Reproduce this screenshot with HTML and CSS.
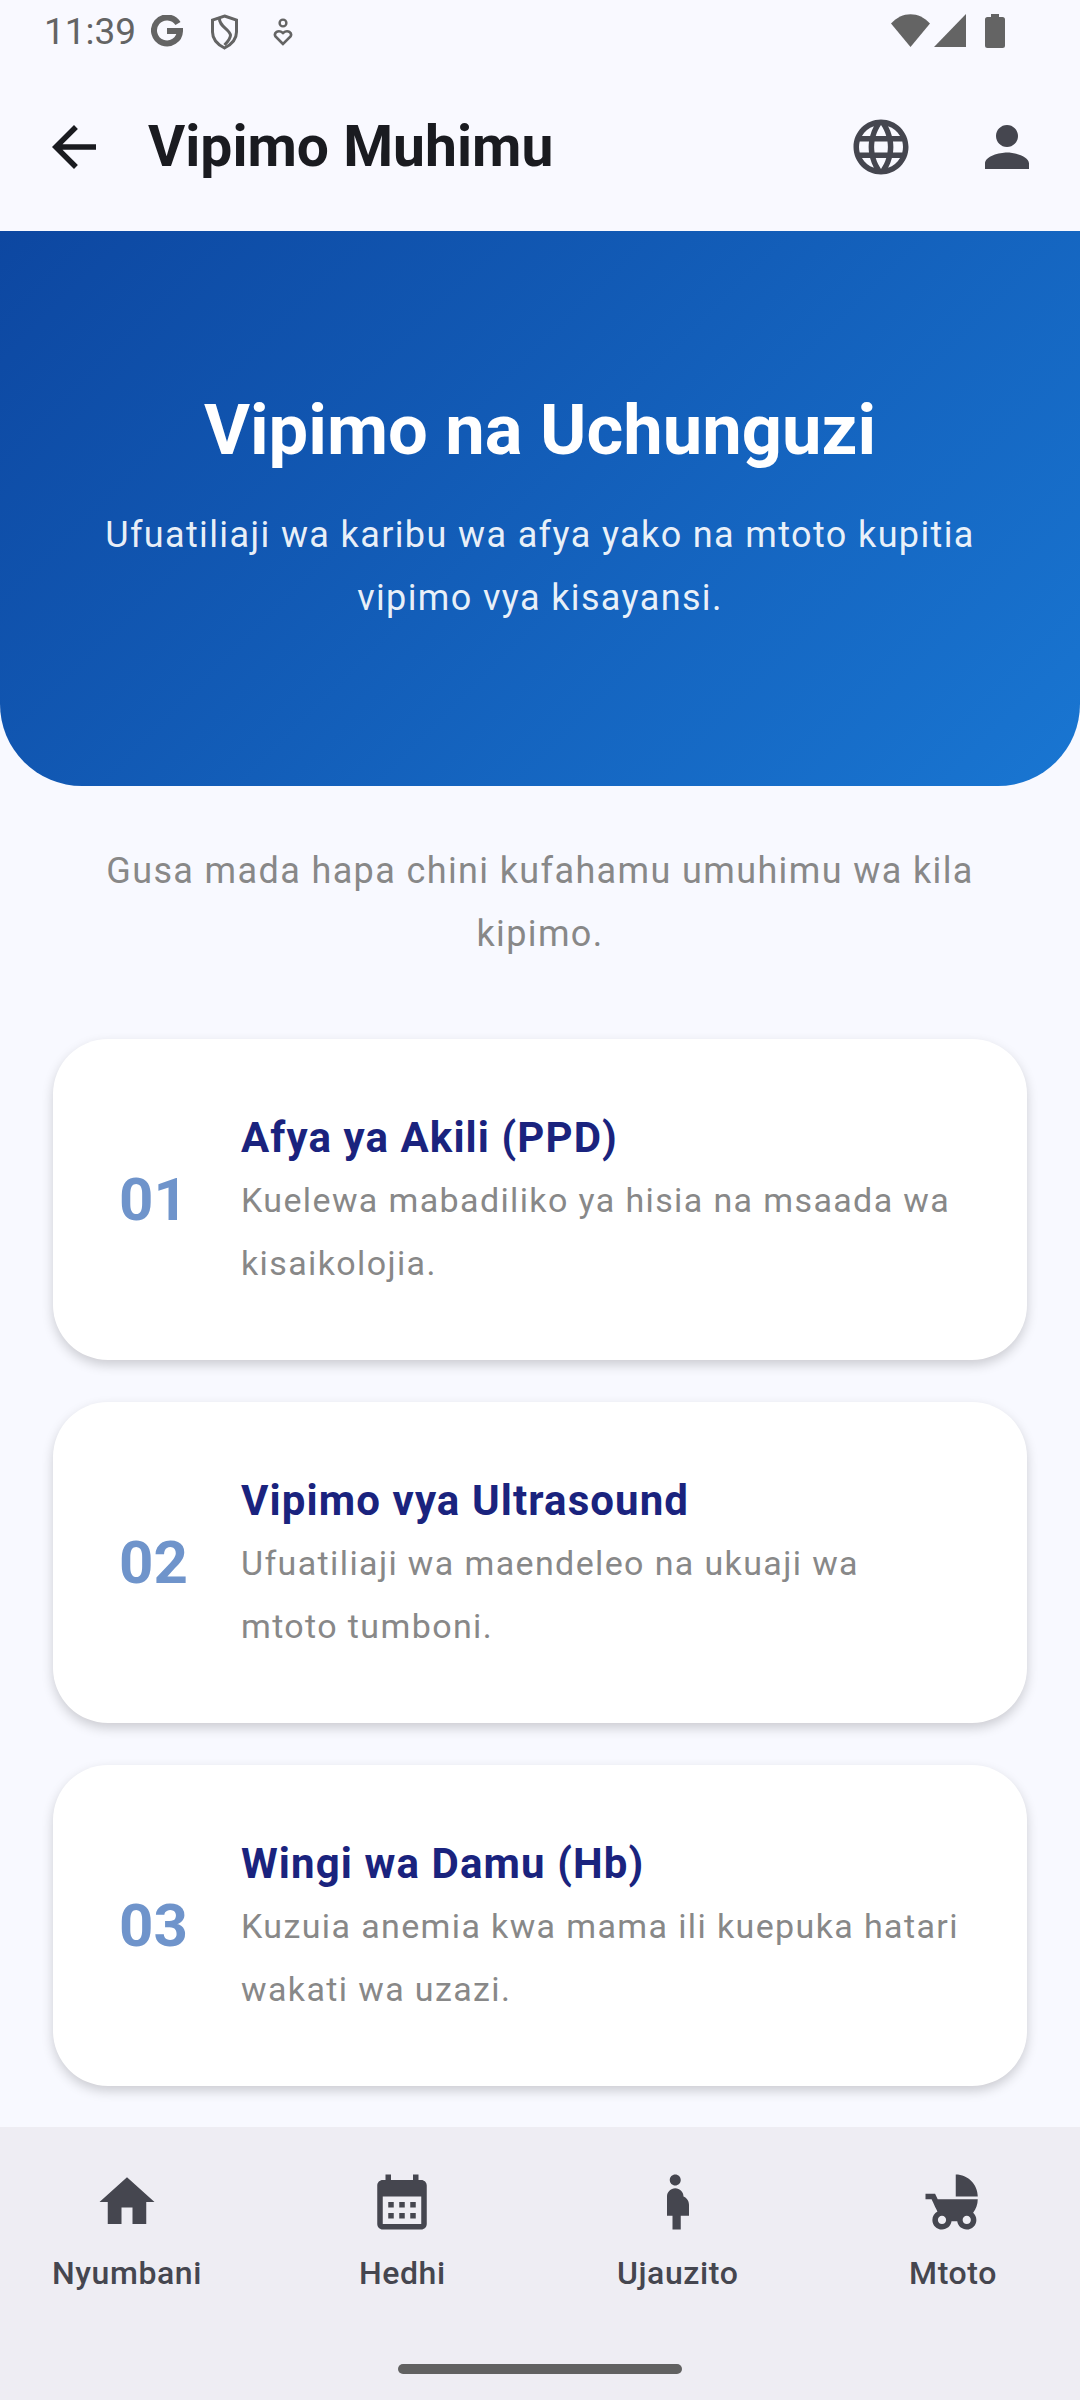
FILE: index.html
```html
<!DOCTYPE html>
<html lang="sw">
  <head>
    <meta charset="UTF-8" />
    <meta name="viewport" content="width=device-width, initial-scale=1.0" />
    <title>Vipimo Muhimu</title>
    <link rel="stylesheet" href="styles.css">
  </head>
  <body>
    <div class="status-bar">
      <div class="status-left">
        <span class="clock">11:39</span>
        <svg class="st-g" viewBox="0 0 32 32"><path d="M27 8.500A13 13 0 1 0 29 16H16" fill="none" stroke="#646464" stroke-width="6"/></svg>
        <svg class="st-shield" viewBox="0 0 28 36"><path d="M14 2 26 6V18C26 26 20 31 14 34 8 31 2 26 2 18V6Z" fill="none" stroke="#646464" stroke-width="3"/><path d="M9 4C8 12 19 15 20 21 20 25 17 28 14 31" fill="none" stroke="#646464" stroke-width="3"/></svg>
        <svg class="st-care" viewBox="0 0 20 28"><circle cx="10" cy="5" r="3.400" fill="none" stroke="#646464" stroke-width="2.400"/><path d="M10 26 2.500 18.500C.5 15 5 11 10 15 15 11 19.500 15 17.500 18.500Z" fill="none" stroke="#646464" stroke-width="2.600"/></svg>
      </div>
      <div class="status-right">
        <svg class="st-wifi" viewBox="0 0 39 33"><path d="M19.500 33 0 9.500C11-3 28-3 39 9.500Z" fill="#646464"/></svg>
        <svg class="st-signal" viewBox="0 0 32 33"><path d="M32 0V33H0Z" fill="#646464"/></svg>
        <svg class="st-battery" viewBox="0 0 20 34"><path d="M6 0H14V3H17.500A2.500 2.500 0 0 1 20 5.500V31.500A2.500 2.500 0 0 1 17.500 34H2.500A2.500 2.500 0 0 1 0 31.500V5.500A2.500 2.500 0 0 1 2.500 3H6Z" fill="#646464"/></svg>
      </div>
    </div>

    <header class="app-bar">
      <svg class="icon back" viewBox="0 0 24 24"><path d="M20 11H7.830l5.590-5.590L12 4l-8 8 8 8 1.410-1.410L7.830 13H20v-2z" fill="#1a1b20"/></svg>
      <h1 class="app-title">Vipimo Muhimu</h1>
      <svg class="icon globe" viewBox="0 0 24 24"><path d="M11.990 2C6.470 2 2 6.480 2 12s4.470 10 9.990 10C17.520 22 22 17.520 22 12S17.520 2 11.990 2zm6.930 6h-2.950c-.32-1.250-.78-2.450-1.380-3.560 1.840.63 3.370 1.910 4.330 3.560zM12 4.040c.83 1.200 1.480 2.530 1.910 3.960h-3.820c.43-1.430 1.080-2.760 1.910-3.960zM4.260 14C4.100 13.360 4 12.690 4 12s.1-1.360.26-2h3.380c-.08.66-.14 1.320-.14 2 0 .68.06 1.340.14 2H4.260zm.82 2h2.950c.32 1.250.78 2.450 1.380 3.560-1.840-.63-3.370-1.900-4.330-3.560zm2.950-8H5.080c.96-1.660 2.490-2.930 4.330-3.560C8.810 5.550 8.350 6.750 8.030 8zM12 19.960c-.83-1.200-1.480-2.530-1.910-3.960h3.820c-.43 1.430-1.080 2.760-1.910 3.960zM14.340 14H9.660c-.09-.66-.16-1.320-.16-2 0-.68.07-1.350.16-2h4.680c.09.65.16 1.320.16 2 0 .68-.07 1.340-.16 2zm.25 5.560c.6-1.110 1.060-2.310 1.380-3.560h2.950c-.96 1.650-2.490 2.930-4.330 3.560zM16.360 14c.08-.66.14-1.320.14-2 0-.68-.06-1.340-.14-2h3.380c.16.64.26 1.310.26 2s-.1 1.360-.26 2h-3.380z" fill="#45464f"/></svg>
      <svg class="icon person" viewBox="0 0 24 24"><path d="M12 12c2.210 0 4-1.790 4-4s-1.790-4-4-4-4 1.790-4 4 1.790 4 4 4zm0 2c-2.670 0-8 1.340-8 4v2h16v-2c0-2.660-5.330-4-8-4z" fill="#45464f"/></svg>
    </header>

    <section class="hero">
      <h2 class="hero-title">Vipimo na Uchunguzi</h2>
      <p class="hero-text">Ufuatiliaji wa karibu wa afya yako na mtoto kupitia vipimo vya kisayansi.</p>
    </section>

    <main class="content">
      <p class="hint">Gusa mada hapa chini kufahamu umuhimu wa kila kipimo.</p>

      <article class="card">
        <div class="card-num">01</div>
        <div class="card-body">
          <h3 class="card-title">Afya ya Akili (PPD)</h3>
          <p class="card-text">Kuelewa mabadiliko ya hisia na msaada wa kisaikolojia.</p>
        </div>
      </article>

      <article class="card">
        <div class="card-num">02</div>
        <div class="card-body">
          <h3 class="card-title">Vipimo vya Ultrasound</h3>
          <p class="card-text">Ufuatiliaji wa maendeleo na ukuaji wa mtoto tumboni.</p>
        </div>
      </article>

      <article class="card">
        <div class="card-num">03</div>
        <div class="card-body">
          <h3 class="card-title">Wingi wa Damu (Hb)</h3>
          <p class="card-text">Kuzuia anemia kwa mama ili kuepuka hatari wakati wa uzazi.</p>
        </div>
      </article>
    </main>

    <nav class="bottom-nav">
      <a class="tab">
        <svg class="icon" viewBox="0 0 24 24"><path d="M10 20v-6h4v6h5v-8h3L12 3 2 12h3v8z" fill="#45464f"/></svg>
        <span>Nyumbani</span>
      </a>
      <a class="tab">
        <svg class="icon" viewBox="0 0 24 24"><path d="M19 4h-1V2h-2v2H8V2H6v2H5c-1.100 0-2 .9-2 2v14c0 1.100.9 2 2 2h14c1.100 0 2-.9 2-2V6c0-1.100-.9-2-2-2zm0 16H5V10h14v10zM9 14H7v-2h2v2zm4 0h-2v-2h2v2zm4 0h-2v-2h2v2zm-8 4H7v-2h2v2zm4 0h-2v-2h2v2zm4 0h-2v-2h2v2z" fill="#45464f"/></svg>
        <span>Hedhi</span>
      </a>
      <a class="tab">
        <svg class="icon" viewBox="0 0 24 24"><path d="M9 4c0-1.110.89-2 2-2s2 .89 2 2-.89 2-2 2-2-.89-2-2zm7 9c-.01-1.340-.83-2.510-2-3 0-1.660-1.340-3-3-3s-3 1.340-3 3v7h2v5h3v-5h3v-4z" fill="#45464f"/></svg>
        <span>Ujauzito</span>
      </a>
      <a class="tab">
        <svg class="icon" viewBox="0 0 24 24"><path d="M13 2v8h8c0-4.420-3.580-8-8-8zm6.320 13.890C20.370 14.540 21 12.840 21 11H6.440l-.95-2H2v2h2.220s1.890 4.070 2.120 4.420c-1.100.59-1.840 1.750-1.840 3.080C4.500 20.430 6.070 22 8 22c1.760 0 3.220-1.300 3.460-3h2.080c.24 1.700 1.700 3 3.460 3 1.930 0 3.500-1.570 3.500-3.500 0-1.040-.46-1.970-1.180-2.610zM8 20c-.83 0-1.500-.67-1.500-1.500S7.170 17 8 17s1.500.67 1.500 1.500S8.830 20 8 20zm9 0c-.83 0-1.500-.67-1.500-1.500s.67-1.500 1.500-1.500 1.500.67 1.500 1.500-.67 1.500-1.500 1.500z" fill="#45464f"/></svg>
        <span>Mtoto</span>
      </a>
      <div class="home-bar"></div>
    </nav>
  </body>
</html>
```

FILE: styles.css
```css
* {
  box-sizing: border-box;
  margin: 0;
  padding: 0;
  font-family: Roboto, "Liberation Sans", sans-serif;
}

body {
  width: 1080px;
  height: 2400px;
  overflow: hidden;
  display: flex;
  flex-direction: column;
  background: #f8f9ff;
}

.status-bar {
  height: 62px;
  flex: none;
  display: flex;
  justify-content: space-between;
  padding: 14px 75px 0 44px;
  background: #f9f9ff;
}

.status-left,
.status-right {
  display: flex;
  align-items: flex-start;
}

.clock {
  font-size: 37px;
  line-height: 35px;
  color: #646464;
}

.st-g {
  width: 32px;
  height: 32px;
  margin: 1px 0 0 15px;
}

.st-shield {
  width: 29px;
  height: 36px;
  margin-left: 27px;
}

.st-care {
  width: 20px;
  height: 28px;
  margin: 4px 0 0 34px;
}

.st-wifi {
  width: 39px;
  height: 33px;
}

.st-signal {
  width: 32px;
  height: 33px;
  margin-left: 4px;
}

.st-battery {
  width: 20px;
  height: 34px;
  margin-left: 19px;
}

.icon {
  width: 66px;
  height: 66px;
  flex: none;
  display: block;
}

.app-bar {
  height: 169px;
  flex: none;
  display: flex;
  align-items: center;
  padding: 0 40px 0 41px;
  background: #f9f9ff;
}

.app-title {
  flex: 1;
  font-size: 57px;
  font-weight: 700;
  color: #1a1b20;
  margin-left: 41px;
}

.person {
  margin-left: 60px;
}

.hero {
  height: 555px;
  flex: none;
  padding: 0 80px;
  display: flex;
  flex-direction: column;
  align-items: center;
  justify-content: center;
  text-align: center;
  color: white;
  background: linear-gradient(135deg, #0d47a1, #1976d2);
  border-radius: 0 0 82px 82px;
}

.hero-title {
  font-size: 70.5px;
  font-weight: 700;
  line-height: 84px;
  margin-bottom: 32px;
}

.hero-text {
  font-size: 36px;
  line-height: 63px;
  letter-spacing: 1.375px;
  color: rgba(255, 255, 255, 0.92);
}

.content {
  flex: 1;
  padding: 54px 53px 0;
  display: flex;
  flex-direction: column;
  gap: 42px;
}

.hint {
  font-size: 36px;
  line-height: 63px;
  letter-spacing: 1.375px;
  color: #888;
  text-align: center;
  padding: 0 30px;
  margin-bottom: 31px;
}

.card {
  height: 321px;
  flex: none;
  display: flex;
  align-items: center;
  padding: 0 65px 0 66px;
  background: white;
  border-radius: 55px;
  box-shadow: 0 5px 12px rgba(0, 0, 0, 0.18);
}

.card-num {
  width: 122px;
  flex: none;
  font-size: 60px;
  font-weight: 700;
  color: #6f94cb;
}

.card-body {
  padding-top: 2px;
}

.card-title {
  font-size: 42px;
  font-weight: 700;
  line-height: 62px;
  letter-spacing: 1.1px;
  color: #1a237e;
}

.card-text {
  font-size: 34px;
  line-height: 63px;
  letter-spacing: 1.375px;
  color: #888;
}

.bottom-nav {
  position: relative;
  height: 273px;
  flex: none;
  display: flex;
  justify-content: space-between;
  align-items: flex-start;
  padding: 42px 27px 0;
  background: #eeedf3;
}

.tab {
  width: 200px;
  display: flex;
  flex-direction: column;
  align-items: center;
  gap: 16px;
  font-size: 32px;
  font-weight: 500;
  line-height: 44px;
  letter-spacing: 0.6px;
  color: #45464f;
}

.home-bar {
  position: absolute;
  left: 398px;
  bottom: 26px;
  width: 284px;
  height: 10px;
  border-radius: 5px;
  background: #616161;
}
```
